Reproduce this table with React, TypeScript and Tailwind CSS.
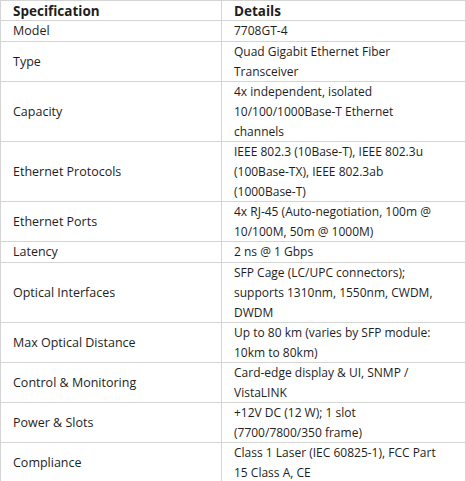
import React from "react";

const rows: { label: string; lines: string[] }[] = [
  { label: "Model", lines: ["7708GT-4"] },
  { label: "Type", lines: ["Quad Gigabit Ethernet Fiber", "Transceiver"] },
  {
    label: "Capacity",
    lines: ["4x independent, isolated", "10/100/1000Base-T Ethernet", "channels"],
  },
  {
    label: "Ethernet Protocols",
    lines: ["IEEE 802.3 (10Base-T), IEEE 802.3u", "(100Base-TX), IEEE 802.3ab", "(1000Base-T)"],
  },
  {
    label: "Ethernet Ports",
    lines: ["4x RJ-45 (Auto-negotiation, 100m @", "10/100M, 50m @ 1000M)"],
  },
  { label: "Latency", lines: ["2 ns @ 1 Gbps"] },
  {
    label: "Optical Interfaces",
    lines: ["SFP Cage (LC/UPC connectors);", "supports 1310nm, 1550nm, CWDM,", "DWDM"],
  },
  {
    label: "Max Optical Distance",
    lines: ["Up to 80 km (varies by SFP module:", "10km to 80km)"],
  },
  {
    label: "Control & Monitoring",
    lines: ["Card-edge display & UI, SNMP /", "VistaLINK"],
  },
  { label: "Power & Slots", lines: ["+12V DC (12 W); 1 slot", "(7700/7800/350 frame)"] },
  {
    label: "Compliance",
    lines: ["Class 1 Laser (IEC 60825-1), FCC Part", "15 Class A, CE"],
  },
];

export default function App() {
  return (
    <div className="w-[466px] bg-white text-[#1e1e1e] font-['Open_Sans',sans-serif] text-[12px]">
      <div className="border-t border-l border-r border-[#d4d4d4]">
        {/* Header */}
        <div className="flex border-b border-[#d4d4d4] font-bold text-[13.5px]">
          <div className="w-[221px] shrink-0 border-r border-[#d4d4d4] pl-3">
            <div className="leading-[20px] -mb-px">Specification</div>
          </div>
          <div className="flex-1 pl-3">
            <div className="leading-[20px] -mb-px">Details</div>
          </div>
        </div>

        {rows.map((row) => (
          <div key={row.label} className="flex border-b border-[#d4d4d4]">
            <div className="w-[221px] shrink-0 border-r border-[#d4d4d4] pl-3 flex items-center text-[12.5px]">
              <div className="leading-[20px]">{row.label}</div>
            </div>
            <div className="flex-1 pl-3">
              <div className="-mb-px">
                {row.lines.map((line) => (
                  <div key={line} className="leading-[20px] whitespace-nowrap">
                    {line}
                  </div>
                ))}
              </div>
            </div>
          </div>
        ))}
      </div>
    </div>
  );
}
